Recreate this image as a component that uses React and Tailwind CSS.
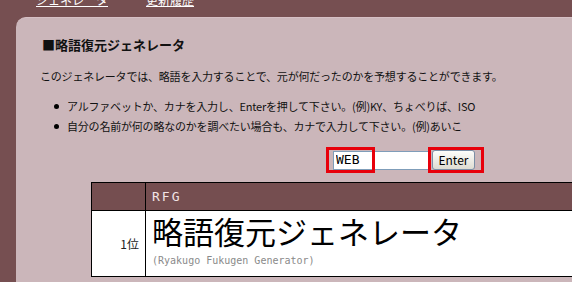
import React, { useState } from "react";

const jp = { fontFamily: '"MS PGothic", "Noto Sans CJK JP", "Liberation Sans", sans-serif' };
const mono = { fontFamily: '"DejaVu Sans Mono", "Noto Sans CJK JP", monospace' };

/* ===============================
   RESULT TABLE
=============================== */

const ResultTable = ({ results }) => (
  <table className="ml-[75px] w-[520px] border-collapse border border-black" style={jp}>
    <thead>
      <tr className="h-[28px] bg-[#754e50]">
        <th className="w-[54px] border border-black"></th>
        <th className="border border-black pl-[6px] text-left text-[13px] font-normal tracking-[2px] text-[#f2e4e6]" style={mono}>
          RFG
        </th>
      </tr>
    </thead>
    <tbody>
      {results.map((r) => (
        <tr key={r.rank} className="h-[66px] bg-white">
          <td className="border border-black pr-[6px] text-right text-[12px] text-[#222]">
            {r.rank}位
          </td>
          <td className="border border-black pl-[6px] align-top">
            <div className="mt-[2px] text-[31px] leading-[36px] text-black">{r.word}</div>
            <div className="mt-[5px] text-[10px] leading-[14px] text-[#8a8a8a]" style={mono}>({r.reading})</div>
          </td>
        </tr>
      ))}
    </tbody>
  </table>
);

export default function App() {
  const [word, setWord] = useState("WEB");

  const results = [
    { rank: 1, word: "略語復元ジェネレータ", reading: "Ryakugo Fukugen Generator" },
  ];

  return (
    <div className="h-[282px] w-[572px] overflow-hidden bg-[#764f51]" style={jp}>
      {/* ===============================
         NAV
      =============================== */}
      <div className="flex h-[17px] items-end overflow-hidden pl-[36px] pb-[11px]">
        <a href="#" className="text-[12px] leading-[12px] text-white underline">ジェネレータ</a>
        <a href="#" className="ml-[38px] text-[12px] leading-[12px] text-white underline">更新履歴</a>
      </div>

      {/* ===============================
         PANEL
      =============================== */}
      <div className="ml-[16px] h-[265px] rounded-tl-[10px] border-t border-[#d6c0c5] bg-[#cbb6ba] text-[#111]">
        <h2 className="pl-[26px] pt-[19px] text-[13px] font-bold leading-[16px]">■略語復元ジェネレータ</h2>

        <p className="mt-[16px] pl-[24px] text-[11px] leading-[14px] tracking-[-0.2px]">
          このジェネレータでは、略語を入力することで、元が何だったのかを予想することができます。
        </p>

        <ul className="mt-[13px] pl-[38px] text-[11px] leading-[20px] tracking-[-0.2px]">
          <li className="flex h-[20px] items-center gap-[4px]">
            <span className="inline-block h-[5px] w-[5px] rounded-full bg-black"></span>
            <span className="ml-[4px]">アルファベットか、カナを入力し、Enterを押して下さい。(例)KY、ちょべりば、ISO</span>
          </li>
          <li className="flex h-[20px] items-center gap-[4px]">
            <span className="inline-block h-[5px] w-[5px] rounded-full bg-black"></span>
            <span className="ml-[4px]">自分の名前が何の略なのかを調べたい場合も、カナで入力して下さい。(例)あいこ</span>
          </li>
        </ul>

        {/* ===============================
           INPUT
        =============================== */}
        <div className="relative ml-[317px] mt-[14px] flex h-[20px] w-[160px] items-center gap-[2px]">
          <input
            value={word}
            onChange={(e) => setWord(e.target.value)}
            className="h-[19px] w-[97px] border border-[#7f9db9] bg-white px-[2px] text-[13px] text-black outline-none"
            style={mono}
          />
          <button className="h-[20px] w-[43px] rounded-[3px] border border-[#7b8ea6] bg-gradient-to-b from-[#fdfdfb] to-[#dedcd2] text-[12px] leading-[16px] text-black">
            Enter
          </button>
          <div className="pointer-events-none absolute left-[-7px] top-[-3px] h-[26px] w-[49px] border-[3px] border-[#e8000b]"></div>
          <div className="pointer-events-none absolute left-[95px] top-[-3px] h-[26px] w-[56px] border-[3px] border-[#e8000b]"></div>
        </div>

        <div className="mt-[12px]">
          <ResultTable results={results} />
        </div>
      </div>
    </div>
  );
}
